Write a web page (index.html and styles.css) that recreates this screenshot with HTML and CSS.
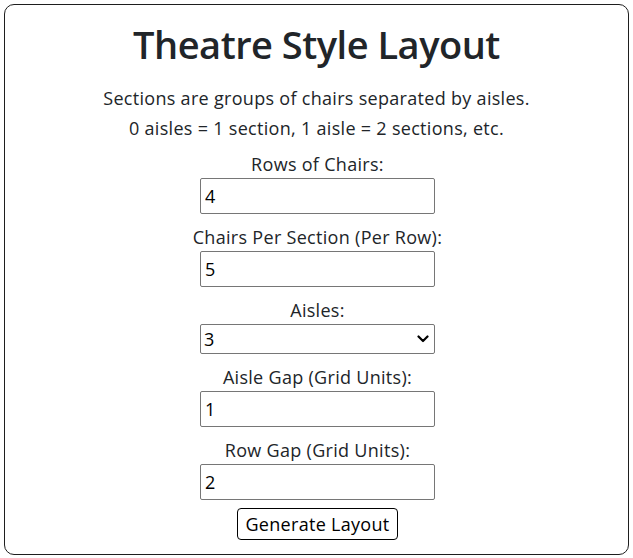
FILE: index.html
```html
<!DOCTYPE html>
<html lang="en">
<head>
<meta charset="utf-8">
<title>Theatre Style Layout</title>
<link rel="stylesheet" href="styles.css">
</head>
<body>
<div class="card">
  <h1 class="title">Theatre Style Layout</h1>
  <p class="intro">Sections are groups of chairs separated by aisles.<br>0 aisles = 1 section, 1 aisle = 2 sections, etc.</p>
  <form class="form">
    <label class="label" for="rows">Rows of Chairs:</label>
    <input class="field" id="rows" type="text" value="4">
    <label class="label" for="chairs">Chairs Per Section (Per Row):</label>
    <input class="field" id="chairs" type="text" value="5">
    <label class="label" for="aisles">Aisles:</label>
    <div class="select-wrap">
      <select class="field select" id="aisles">
        <option>0</option>
        <option>1</option>
        <option>2</option>
        <option selected>3</option>
      </select>
      <svg class="chevron" width="12" height="8" viewBox="0 0 12 8" aria-hidden="true"><path d="M1.5 1.5 L6 6 L10.5 1.5" fill="none" stroke="#000" stroke-width="2.2" stroke-linecap="round" stroke-linejoin="round"/></svg>
    </div>
    <label class="label" for="agap">Aisle Gap (Grid Units):</label>
    <input class="field" id="agap" type="text" value="1">
    <label class="label" for="rgap">Row Gap (Grid Units):</label>
    <input class="field" id="rgap" type="text" value="2">
    <button class="btn" type="button">Generate Layout</button>
  </form>
</div>
</body>
</html>
```
FILE: styles.css
```css
html, body {
  margin: 0;
  padding: 0;
  background: #fff;
}
body {
  padding: 4px 4px 4px 4px;
  font-family: "Open Sans", "Noto Sans", sans-serif;
  color: #212529;
  letter-spacing: 0.3px;
}
.card {
  border: 1px solid #1e1e1e;
  border-radius: 10px;
  padding: 17px 0 14px;
  text-align: center;
  background: #fff;
}
.title {
  margin: -2px 0 15px;
  font-size: 38px;
  line-height: 48px;
  font-weight: 600;
  letter-spacing: -0.5px;
}
.intro {
  margin: 0 0 8px;
  font-size: 18px;
  line-height: 30px;
}
.form {
  display: flex;
  flex-direction: column;
  align-items: center;
  padding-left: 2px;
}
.label {
  display: block;
  font-size: 18px;
  line-height: 27px;
}
.field {
  box-sizing: border-box;
  width: 235px;
  height: 36px;
  margin: 0 0 10px;
  padding: 0 4px;
  border: 1px solid #767676;
  border-radius: 2px;
  font-family: inherit;
  font-size: 18px;
  letter-spacing: 0;
  color: #000;
  background: #fff;
  outline: none;
}
.select-wrap {
  position: relative;
  width: 235px;
  height: 30px;
  margin: 0 0 10px;
}
.select {
  height: 30px;
  margin: 0;
  padding: 0 3px;
  appearance: none;
  -webkit-appearance: none;
}
.chevron {
  position: absolute;
  right: 6px;
  top: 11px;
  pointer-events: none;
}
.btn {
  margin-top: -2px;
  box-sizing: border-box;
  height: 32px;
  padding: 0 7px;
  border: 1px solid #000;
  border-radius: 4px;
  background: #fff;
  font-family: inherit;
  font-size: 18px;
  letter-spacing: 0.3px;
  color: #000;
}
```
